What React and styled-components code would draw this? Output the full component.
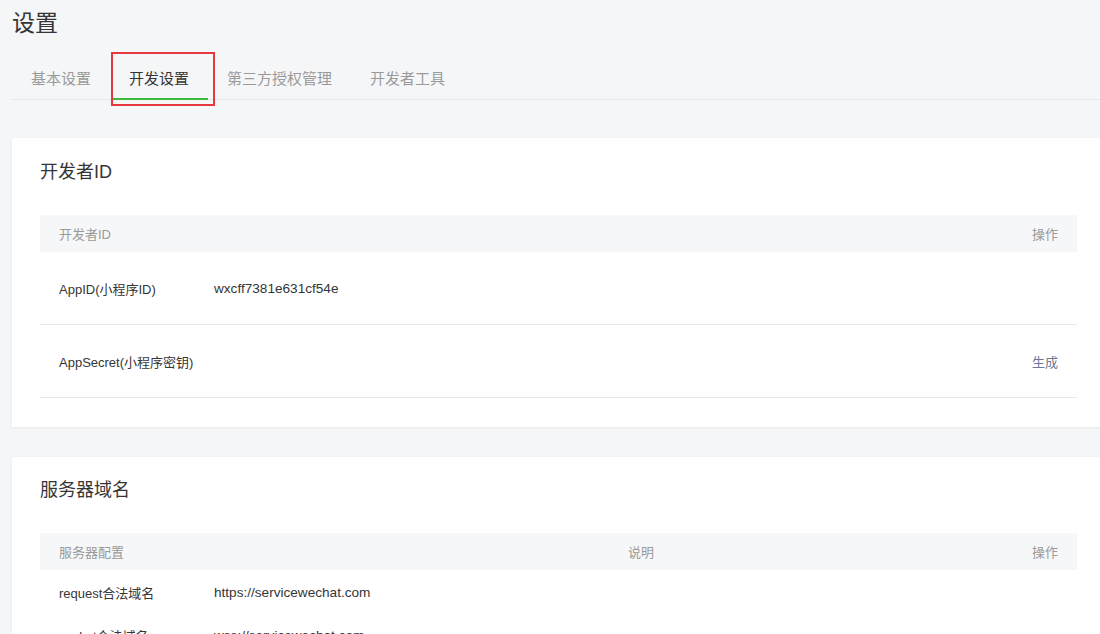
import React from "react";
import styled, { createGlobalStyle } from "styled-components";

const Global = createGlobalStyle`
  html, body {
    margin: 0;
    padding: 0;
    background: #f5f6f8;
    overflow: hidden;
  }
  body {
    font-family: "Liberation Sans", "Noto Sans CJK SC", sans-serif;
    color: #353535;
  }
  * { box-sizing: border-box; }
`;

const Page = styled.div`
  width: 1105px;
  padding: 8px 0 40px 12px;
`;

const Title = styled.h1`
  margin: 0;
  font-size: 23px;
  line-height: 30px;
  font-weight: 400;
  color: #353535;
`;

const TabBar = styled.div`
  display: flex;
  height: 41px;
  margin-top: 21px;
  border-bottom: 1px solid #e7e7eb;
`;

const Tab = styled.div`
  position: relative;
  padding: 0 19px;
  height: 40px;
  line-height: 40px;
  font-size: 15px;
  color: ${(p) => (p.$active ? "#353535" : "#9a9a9a")};
`;

const Underline = styled.span`
  position: absolute;
  left: 3px;
  right: 0;
  bottom: -1px;
  height: 2px;
  background: #3cb93c;
`;

const Annotation = styled.span`
  position: absolute;
  left: 1px;
  top: -7px;
  width: 104px;
  height: 54px;
  border: 2px solid #e8383d;
`;

const Card = styled.section`
  background: #fff;
  margin-top: ${(p) => p.$gap}px;
  padding: ${(p) => p.$pt}px 28px 29px;
  box-shadow: 0 1px 3px rgba(0, 0, 0, 0.06);
`;

const CardTitle = styled.h2`
  margin: 0 0 30px;
  font-size: 18px;
  line-height: 26px;
  font-weight: 400;
  color: #353535;
`;

const HeadRow = styled.div`
  display: flex;
  height: 37px;
  align-items: center;
  background: #f6f7f9;
  font-size: 13px;
  color: #9a9a9a;
`;

const Row = styled.div`
  display: flex;
  align-items: center;
  height: ${(p) => p.$h}px;
  border-bottom: ${(p) => (p.$line ? "1px solid #e7e7eb" : "none")};
  font-size: 13px;
  color: #353535;
`;

const Cell = styled.div`
  padding: 0 19px;
  white-space: nowrap;
  ${(p) => (p.$w ? `width: ${p.$w}px; flex: none;` : "flex: 1;")}
  text-align: ${(p) => (p.$right ? "right" : "left")};
`;

const Value = styled.span`
  font-size: 13.6px;
`;

const Link = styled.span`
  color: #6b7699;
`;

export default function App() {
  return (
    <>
      <Global />
      <Page>
        <Title>设置</Title>
        <TabBar>
          <Tab>基本设置</Tab>
          <Tab $active>
            开发设置
            <Underline />
            <Annotation />
          </Tab>
          <Tab>第三方授权管理</Tab>
          <Tab>开发者工具</Tab>
        </TabBar>

        <Card $gap={38} $pt={21}>
          <CardTitle>开发者ID</CardTitle>
          <HeadRow>
            <Cell>开发者ID</Cell>
            <Cell $right>操作</Cell>
          </HeadRow>
          <Row $h={73} $line>
            <Cell $w={155}>AppID(小程序ID)</Cell>
            <Cell>
              <Value>wxcff7381e631cf54e</Value>
            </Cell>
          </Row>
          <Row $h={73} $line>
            <Cell $w={155}>AppSecret(小程序密钥)</Cell>
            <Cell $right>
              <Link>生成</Link>
            </Cell>
          </Row>
        </Card>

        <Card $gap={30} $pt={20}>
          <CardTitle>服务器域名</CardTitle>
          <HeadRow>
            <Cell $w={569}>服务器配置</Cell>
            <Cell>说明</Cell>
            <Cell $right>操作</Cell>
          </HeadRow>
          <Row $h={44}>
            <Cell $w={155}>request合法域名</Cell>
            <Cell>
              <Value>https://servicewechat.com</Value>
            </Cell>
          </Row>
          <Row $h={42}>
            <Cell $w={155}>socket合法域名</Cell>
            <Cell>
              <Value>wss://servicewechat.com</Value>
            </Cell>
          </Row>
        </Card>
      </Page>
    </>
  );
}
